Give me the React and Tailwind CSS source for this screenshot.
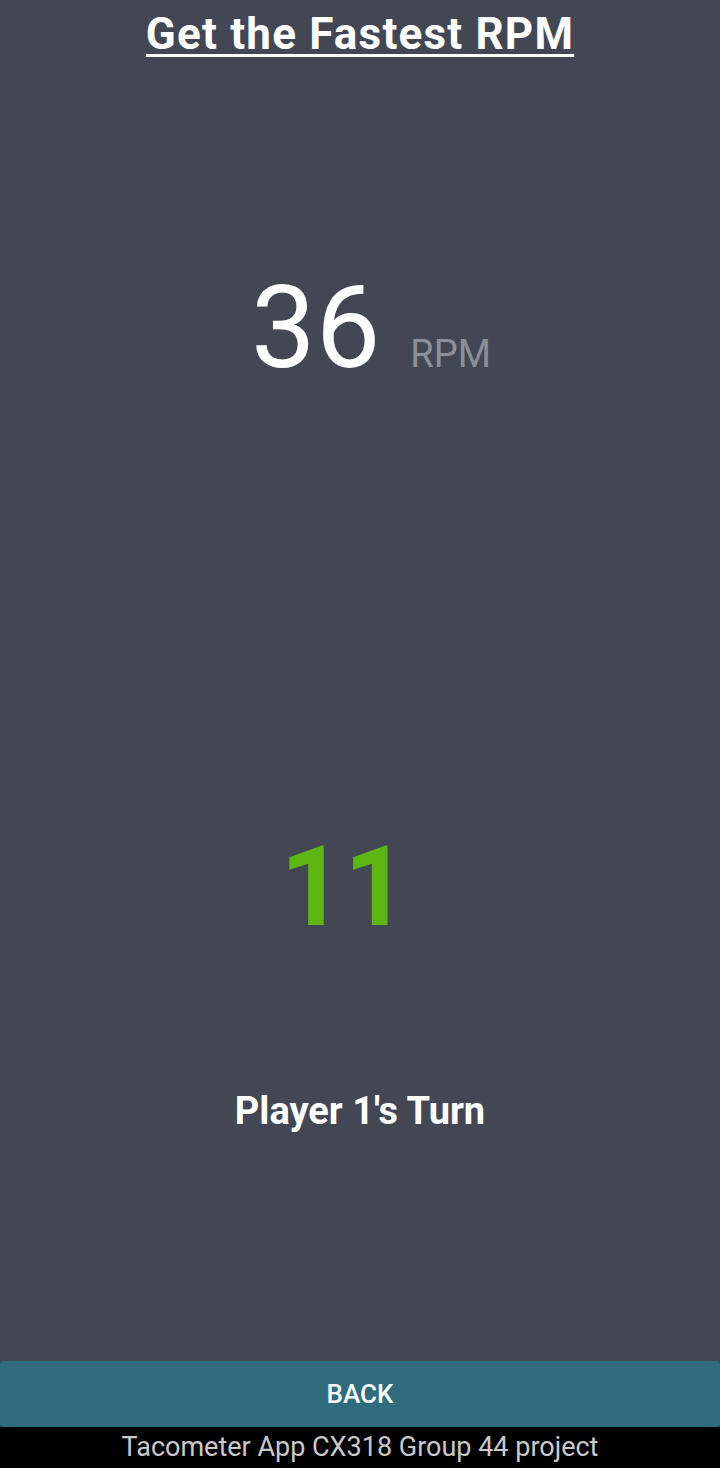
export default function App() {
  return (
    <div className="w-[720px] h-[1468px] flex flex-col bg-[#424753] font-['Roboto',sans-serif] overflow-hidden">
      <div className="flex-1 flex flex-col items-center">
        <h1 className="mt-[6px] text-[44px] leading-[56px] font-bold tracking-[1.2px] text-white underline decoration-[3px] underline-offset-[5px]">
          Get the Fastest RPM
        </h1>
        <div className="mt-[208px] flex items-baseline gap-[30px] pl-[22px]">
          <span className="text-[115px] leading-none text-white">36</span>
          <span className="text-[38px] leading-none text-[#8c8f96]">RPM</span>
        </div>
        <div className="mt-[447px] pr-[32px] text-[111px] leading-none font-bold text-[#5cb614]">
          11
        </div>
        <div className="mt-[149px] text-[38px] leading-none font-bold text-white">
          Player 1's Turn
        </div>
      </div>
      <button className="h-[66px] w-full rounded-[4px] bg-[#2f6c7e] text-white text-[26px] font-medium">
        BACK
      </button>
      <div className="h-[41px] bg-black flex items-center justify-center text-[27px] leading-none text-[#c9c9c9]">
        Tacometer App CX318 Group 44 project
      </div>
    </div>
  );
}
